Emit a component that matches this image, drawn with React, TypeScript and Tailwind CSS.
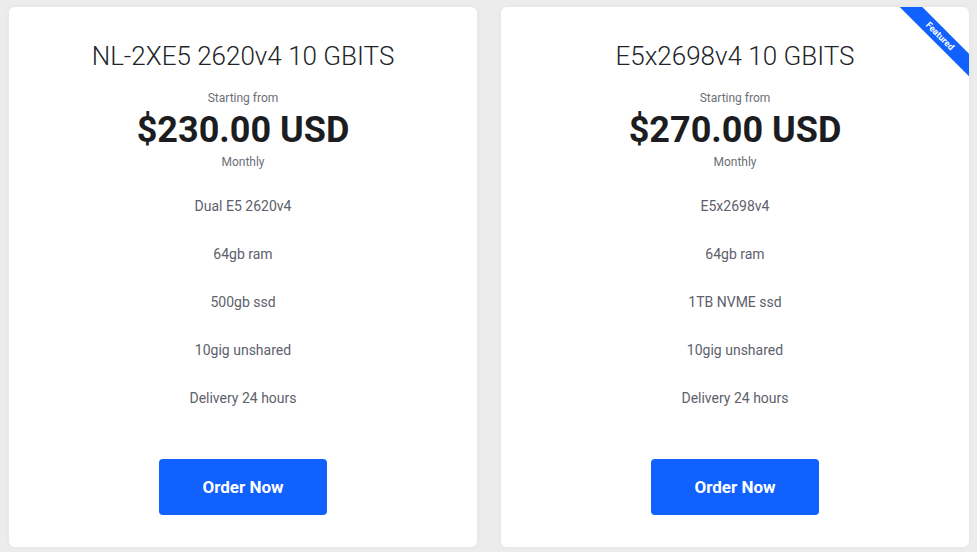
const plans = [
  {
    name: 'NL-2XE5 2620v4 10 GBITS',
    price: '$230.00 USD',
    features: ['Dual E5 2620v4', '64gb ram', '500gb ssd', '10gig unshared', 'Delivery 24 hours'],
    featured: false,
  },
  {
    name: 'E5x2698v4 10 GBITS',
    price: '$270.00 USD',
    features: ['E5x2698v4', '64gb ram', '1TB NVME ssd', '10gig unshared', 'Delivery 24 hours'],
    featured: true,
  },
]

function PlanCard({ plan }: { plan: (typeof plans)[number] }) {
  return (
    <div className="relative flex-1 overflow-hidden rounded-md bg-white shadow-[0_0_6px_rgba(0,0,0,0.04)] flex flex-col items-center pt-[33px] pb-[32px]">
      {plan.featured && (
        <div className="absolute top-[21px] right-[-31px] w-[120px] h-[16px] rotate-45 bg-[#1061fe] flex items-center justify-center">
          <span className="text-[9px] font-bold text-white leading-none">Featured</span>
        </div>
      )}
      <h3 className="text-[26px] leading-[32px] font-light text-[#212529]">{plan.name}</h3>
      <span className="mt-[18px] text-[12px] leading-[16px] text-[#6c6f78]">Starting from</span>
      <span className="mt-[3px] text-[36px] leading-[42px] font-bold text-[#1c1d21]">{plan.price}</span>
      <span className="mt-[3px] text-[12px] leading-[16px] text-[#6c6f78]">Monthly</span>
      <ul className="mt-[12px] flex flex-col items-center">
        {plan.features.map((f) => (
          <li key={f} className="py-[14px] text-[14px] leading-[20px] text-[#5d616b]">
            {f}
          </li>
        ))}
      </ul>
      <button className="mt-auto w-[168px] h-[56px] pt-[1px] rounded-[4px] bg-[#1061fe] text-white text-[17px] font-bold">
        Order Now
      </button>
    </div>
  )
}

export default function App() {
  return (
    <main
      className="w-[977px] h-[552px] bg-[#ececec] pt-[7px] pl-[9px] pr-[8px] pb-[5px] flex gap-[24px]"
      style={{ fontFamily: 'Roboto, "Liberation Sans", sans-serif' }}
    >
      {plans.map((p) => (
        <PlanCard key={p.name} plan={p} />
      ))}
    </main>
  )
}
